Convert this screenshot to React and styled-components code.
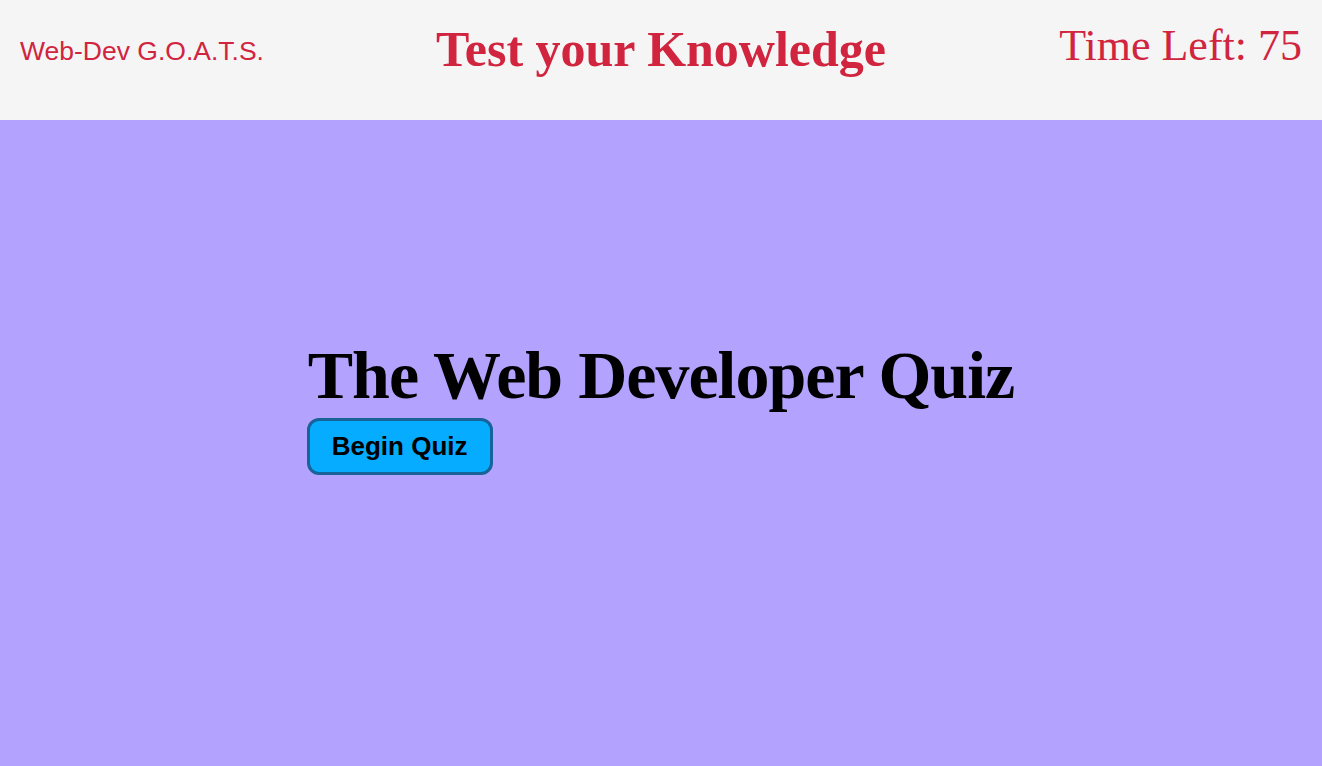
import React from "react";
import styled, { createGlobalStyle } from "styled-components";

const Global = createGlobalStyle`
  html, body { margin: 0; padding: 0; }
  body { background: #b3a3ff; font-family: "Liberation Serif", "Times New Roman", serif; }
`;

const Header = styled.header`
  height: 120px;
  background: #f5f5f5;
  display: flex;
  align-items: flex-start;
  justify-content: space-between;
  padding: 21px 20px 0;
  box-sizing: border-box;
  color: #d1243e;
`;

const Brand = styled.div`
  font-family: "Liberation Sans", Arial, sans-serif;
  font-size: 26.5px;
  line-height: 31px;
  margin-top: 15px;
  width: 300px;
`;

const Title = styled.h1`
  margin: 0;
  font-size: 50px;
  line-height: 57px;
  font-weight: bold;
`;

const Timer = styled.div`
  font-size: 44px;
  line-height: 50px;
  margin-top: 0;
  width: 300px;
  text-align: right;
`;

const Main = styled.main`
  height: 646px;
  display: flex;
  justify-content: center;
  align-items: flex-start;
  padding-top: 221px;
  box-sizing: border-box;
`;

const Intro = styled.section`
  display: flex;
  flex-direction: column;
  align-items: flex-start;
`;

const Heading = styled.h2`
  margin: 0;
  font-size: 68px;
  letter-spacing: -1px;
  font-weight: bold;
  line-height: 68px;
`;

const Button = styled.button`
  margin-top: 9px;
  margin-left: -1px;
  font-family: "Liberation Sans", Arial, sans-serif;
  font-size: 26px;
  line-height: 31px;
  font-weight: bold;
  color: #000;
  background: #05acff;
  border: 3px solid #17639a;
  border-radius: 12px;
  padding: 10px 22px;
  cursor: pointer;
`;

export default function App() {
  return (
    <>
      <Global />
      <Header>
        <Brand>Web-Dev G.O.A.T.S.</Brand>
        <Title>Test your Knowledge</Title>
        <Timer>Time Left: 75</Timer>
      </Header>
      <Main>
        <Intro>
          <Heading>The Web Developer Quiz</Heading>
          <Button>Begin Quiz</Button>
        </Intro>
      </Main>
    </>
  );
}
